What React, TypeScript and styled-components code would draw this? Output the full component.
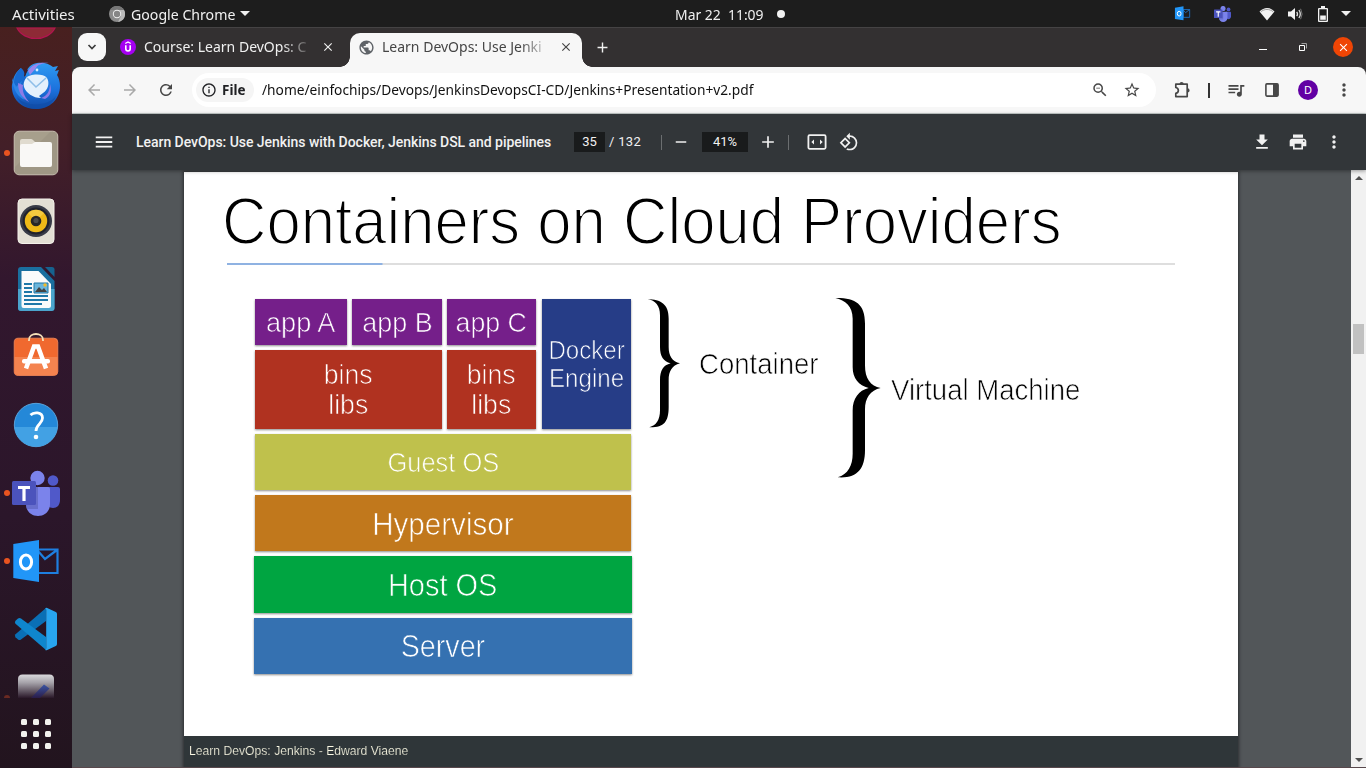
import React from "react";
import styled, { createGlobalStyle } from "styled-components";
import {
  MdAdd,
  MdArrowBack,
  MdArrowForward,
  MdClose,
  MdFileDownload,
  MdInfoOutline,
  MdMenu,
  MdMoreVert,
  MdPrint,
  MdPublic,
  MdQueueMusic,
  MdRefresh,
  MdRemove,
  MdRotate90DegreesCcw,
  MdStarBorder,
  MdZoomOut,
} from "react-icons/md";

const GlobalStyle = createGlobalStyle`
  * { box-sizing: border-box; }
  body { margin: 0; overflow: hidden; background: #1d1d1d; font-family: "Noto Sans", "Open Sans", sans-serif; }
  svg { display: block; flex: none; }
`;

const uiFont = `"Noto Sans", "Open Sans", sans-serif`;
const slideFont = `"Liberation Sans", Arial, sans-serif`;

const Desktop = styled.div`
  width: 1366px;
  height: 768px;
  display: flex;
  flex-direction: column;
  overflow: hidden;
`;

/* ---------- GNOME top bar ---------- */

const TopBar = styled.header`
  flex: none;
  height: 27px;
  display: grid;
  grid-template-columns: 640px 1fr 204px;
  align-items: center;
  background: #1d1d1d;
  color: #f0f0f0;
`;

const BarGroup = styled.div<{ $pad?: number }>`
  display: flex;
  align-items: center;
  height: 27px;
  padding-left: ${(p) => p.$pad ?? 0}px;
`;

const UiText = styled.span<{ $size?: number; $scale?: number; $width?: number; $bold?: boolean; $color?: string }>`
  flex: none;
  font: ${(p) => (p.$bold ? 700 : 400)} ${(p) => p.$size ?? 14}px/20px ${uiFont};
  color: ${(p) => p.$color ?? "inherit"};
  width: ${(p) => (p.$width ? `${p.$width}px` : "auto")};
  white-space: pre;
  transform: scaleX(${(p) => p.$scale ?? 1});
  transform-origin: left center;
`;

const Caret = styled.i<{ $gap: number }>`
  width: 10px;
  height: 5px;
  margin-left: ${(p) => p.$gap}px;
  border: 5px solid transparent;
  border-top-color: #f0f0f0;
  border-bottom: 0;
`;

const Bullet = styled.i`
  width: 8px;
  height: 8px;
  border-radius: 50%;
  background: #f2f2f2;
`;

const StatusArea = styled.div`
  display: grid;
  grid-template-columns: 40px 45px 28px 31px 20px 1fr;
  align-items: center;
  padding-left: 12px;
`;

/* ---------- Dock ---------- */

const Main = styled.div`
  flex: 1;
  min-height: 0;
  display: flex;
`;

const Dock = styled.nav`
  flex: none;
  width: 72px;
  display: flex;
  flex-direction: column;
  background: linear-gradient(180deg, #48201f 0%, #431f28 16%, #32172e 34%, #2b162a 66%, #22141e 100%);
`;

const DockItem = styled.div<{ $height?: number }>`
  flex: none;
  height: ${(p) => p.$height ?? 68}px;
  overflow: hidden;
`;

const AppGrid = styled.div`
  display: grid;
  grid-template-columns: repeat(3, 6px);
  gap: 6px;
  margin: 21px auto 0;
`;

const GridDot = styled.i`
  height: 6px;
  border-radius: 1.5px;
  background: #f2f2ee;
`;

/* ---------- Browser window ---------- */

const Window = styled.section`
  flex: 1;
  min-width: 0;
  display: flex;
  flex-direction: column;
  background: #333031;
`;

const TabStrip = styled.div`
  flex: none;
  height: 40px;
  border-top: 1px solid #454344;
  display: flex;
  padding: 5px 0 0 6px;
`;

const TabSearch = styled.div`
  width: 28px;
  height: 28px;
  border-radius: 9px;
  background: #f7f7f7;
  display: grid;
  place-items: center;
`;

const Tab = styled.div<{ $active?: boolean; $width: number }>`
  position: relative;
  width: ${(p) => p.$width}px;
  height: 34px;
  padding-left: ${(p) => (p.$active ? 8 : 14)}px;
  padding-bottom: 6px;
  display: flex;
  align-items: center;
  color: ${(p) => (p.$active ? "#454545" : "#f0f0f0")};
  background: ${(p) => (p.$active ? "#f7f7f7" : "transparent")};
  border-radius: 10px 10px 0 0;
  &::before, &::after {
    content: "";
    display: ${(p) => (p.$active ? "block" : "none")};
    position: absolute;
    bottom: 0;
    width: 10px;
    height: 10px;
  }
  &::before { left: -10px; background: radial-gradient(circle at 0 0, transparent 9.5px, #f7f7f7 10px); }
  &::after { right: -10px; background: radial-gradient(circle at 100% 0, transparent 9.5px, #f7f7f7 10px); }
`;

const TabTitle = styled.div`
  width: 172px;
  margin: 0 4px 2px 8px;
  mask-image: linear-gradient(90deg, #000 138px, transparent 170px);
`;

const TabClose = styled.div`
  width: 16px;
  display: grid;
  place-items: center;
`;

const Favicon = styled.div`
  width: 16px;
  height: 16px;
  display: grid;
  place-items: center;
`;

const NewTab = styled.div`
  width: 40px;
  height: 28px;
  color: #f0f0f0;
  display: grid;
  place-items: center;
`;

const WindowButtons = styled.div`
  margin-left: auto;
  height: 28px;
  display: grid;
  grid-template-columns: 40px 40px 40px;
  place-items: center;
  padding-right: 3px;
`;

const CloseButton = styled.div`
  width: 20px;
  height: 20px;
  border-radius: 50%;
  background: #ef4505;
  display: grid;
  place-items: center;
`;

const AddressRow = styled.div`
  flex: none;
  height: 47px;
  border-bottom: 1px solid #c7cecd;
  border-radius: 8px 8px 0 0;
  background: #f7f7f7;
  display: flex;
  align-items: center;
  padding: 0 4px;
  color: #474747;
`;

const Slot = styled.div<{ $width?: number; $color?: string }>`
  flex: none;
  width: ${(p) => p.$width ?? 36}px;
  display: grid;
  place-items: center;
  color: ${(p) => p.$color ?? "inherit"};
`;

const Omnibox = styled.div`
  width: 964px;
  height: 34px;
  margin: 0 8px;
  padding: 0 8px 0 4px;
  border-radius: 17px;
  background: #fff;
  display: flex;
  align-items: center;
`;

const FileChip = styled.div`
  width: 58px;
  height: 24px;
  margin-right: 8px;
  padding-left: 5px;
  border-radius: 12px;
  background: #f5f5f5;
  color: #202124;
  display: flex;
  align-items: center;
  gap: 5px;
`;

const Spacer = styled.div`
  flex: 1;
`;

const ToolbarRule = styled.i`
  width: 2px;
  height: 15px;
  background: #333;
`;

const Avatar = styled.div`
  width: 20px;
  height: 20px;
  border-radius: 50%;
  background: #6200a4;
  color: #fff;
  font: 400 11px/20px ${uiFont};
  text-align: center;
`;

/* ---------- PDF viewer ---------- */

const PdfToolbar = styled.div`
  position: relative;
  z-index: 1;
  flex: none;
  height: 56px;
  background: #323639;
  box-shadow: 0 1px 4px rgba(0, 0, 0, 0.4);
  display: flex;
  align-items: center;
  padding-left: 14px;
  color: #f1f1f1;
  font: 400 13px/20px Roboto, sans-serif;
`;

const PdfTitle = styled.div`
  width: 438px;
  margin-left: 14px;
  font: 500 14px/20px Roboto, sans-serif;
  letter-spacing: -0.04px;
  white-space: nowrap;
`;

const Field = styled.div<{ $width: number }>`
  width: ${(p) => p.$width}px;
  height: 20px;
  background: #191b1c;
  text-align: center;
`;

const PageTotal = styled.div`
  width: 54px;
  padding-left: 4px;
  letter-spacing: 0.3px;
  white-space: pre;
`;

const Divider = styled.i<{ $gap?: number }>`
  width: 1px;
  height: 15px;
  margin-right: ${(p) => p.$gap ?? 0}px;
  background: #6b6e70;
`;

const Viewport = styled.div`
  flex: 1;
  min-height: 0;
  display: flex;
  background: #525659;
  border-bottom: 1px solid #58484c;
`;

const Canvas = styled.div`
  flex: 1;
  padding: 2px 0 0 112px;
  overflow: hidden;
`;

const Scrollbar = styled.div`
  width: 15px;
  background: #f1f1f1;
  display: flex;
  flex-direction: column;
  align-items: center;
  padding: 6px 0 5px;
`;

const ScrollThumb = styled.div`
  width: 11px;
  height: 30px;
  margin: 144px 0 auto;
  background: #c1c1c1;
`;

const ScrollArrow = styled.i<{ $down?: boolean }>`
  border: 4px solid transparent;
  ${(p) => (p.$down ? "border-top-color: #505050; border-bottom: 0;" : "border-bottom-color: #505050; border-top: 0;")}
`;

const Slide = styled.article`
  width: 1054px;
  height: 596px;
  display: flex;
  flex-direction: column;
  background: #fff;
  box-shadow: 0 0 3px 1px #2c2e30;
`;

/* Light cut of the face: the outline is painted in the surface colour, which slims the stems. */
const SlideText = styled.div<{ $size: number; $line: number; $scale?: number; $thin?: number; $surface: string; $left?: boolean }>`
  font: 400 ${(p) => p.$size}px/${(p) => p.$line}px ${slideFont};
  white-space: pre;
  text-align: ${(p) => (p.$left ? "left" : "center")};
  -webkit-text-stroke: ${(p) => p.$thin ?? 0.7}px ${(p) => p.$surface};
  transform: scaleX(${(p) => p.$scale ?? 0.95});
  transform-origin: ${(p) => (p.$left ? "left" : "center")};
`;

const SlideHeader = styled.div`
  padding: 11px 0 0 38px;
  height: 91px;
  color: #000;
`;

const SlideRule = styled.div`
  flex: none;
  width: 948px;
  height: 2px;
  margin-left: 43px;
  background: linear-gradient(90deg, #8fb2e2 155px, #dedede 156px);
`;

const SlideBody = styled.div`
  flex: 1;
  display: flex;
  align-items: flex-start;
  padding: 34px 0 0 71px;
  color: #000;
`;

const Stack = styled.div`
  flex: none;
  display: grid;
  grid-template-columns: 92px 90px 89px 90px;
  grid-template-rows: 46px 79px 56px 56px 57px 56px;
  gap: 5px;
  color: #fff;
`;

const Block = styled.div<{ $fill: string; $cols?: number; $rows?: number; $outset?: number; $inset?: number; $drop?: number }>`
  grid-column: span ${(p) => p.$cols ?? 1};
  grid-row: span ${(p) => p.$rows ?? 1};
  margin: 0 -${(p) => p.$outset ?? 0}px;
  ${(p) => (p.$inset ? `margin-left: ${p.$inset}px;` : "")}
  padding-top: ${(p) => (p.$drop ?? 0) * 2}px;
  display: grid;
  place-items: center;
  align-content: center;
  background: ${(p) => p.$fill};
  box-shadow: 0 1px 2px rgba(0, 0, 0, 0.45);
`;

const Offset = styled.div<{ $top: number; $left: number; $width?: number }>`
  flex: none;
  padding-top: ${(p) => p.$top}px;
  margin-left: ${(p) => p.$left}px;
  width: ${(p) => (p.$width ? `${p.$width}px` : "auto")};
`;

const SlideFooter = styled.div`
  flex: none;
  height: 32px;
  padding: 5px 0 0 5px;
  background: #2f3639;
  color: #fbf9e4;
`;

/* ---------- Drawings ---------- */

const ThunderbirdIcon = () => (
  <svg width="72" height="68" viewBox="0 0 72 68">
    <defs>
      <linearGradient id="tb" x1="0" y1="0" x2="0" y2="1">
        <stop offset="0" stopColor="#2f9bf2" />
        <stop offset="0.6" stopColor="#1b70dc" />
        <stop offset="1" stopColor="#124ba4" />
      </linearGradient>
    </defs>
    <path d="M21 17c-5 4-8 9-8 14-2 3-1 8 0 12 3 9 12 15 23 15 14 0 24-10 24-23 0-4-1-8-3-11 1-2 1-3 2-5l-4 1 3-5-5 1c-4-4-11-5-16-4-6 1-10 5-11 10l-2 8z" fill="url(#tb)" />
    <path d="M25 17 28 19 24 27 22 27z" fill="#3c1d2a" />
    <path d="M21 17c-5 4-7 10-7 16l8 6 5-12-3-2c1-3 0-6-3-8z" fill="#1769cf" />
    <path d="M12 27c1 12 6 19 13 22-5-7-6-13-3-19l-6 6z" fill="#2c86e8" />
    <path d="M28 20c4-7 12-9 21-8-7 0-12 2-13 5l-6 7z" fill="#9a86ee" />
    <path d="M18 32c0 9 4 15 11 19-5-6-7-11-6-17z" fill="#8d7be6" />
    <path d="M26 27c3-4 17-5 21 0 3 5 1 12-4 15l-4 3 2 2c-8 0-15-5-17-11-1-3 0-6 2-9z" fill="#e4f0fc" />
    <path d="m27 27 9 9 10-9" fill="none" stroke="#8ebee8" strokeWidth="1.6" />
    <path d="M41 47c6-2 9-7 9-14 2 6 1 12-5 15z" fill="#8d7be6" />
    <circle cx="37" cy="19" r="1.4" fill="#d8ecff" />
    <path d="M17 46c8 10 31 10 39-1-4 9-11 13-20 13-8 0-15-4-19-12z" fill="#0f4da8" opacity=".7" />
  </svg>
);

const FilesIcon = () => (
  <svg width="72" height="68" viewBox="0 0 72 68">
    <rect x="14.2" y="12.2" width="43.6" height="43.6" rx="5" fill="#a79f8c" stroke="#d0c9ba" strokeWidth=".9" />
    <path d="M15 48 50 13h5q2 0 2 3v37q0 2-3 2H18q-3 0-3-3z" fill="#978f7c" opacity=".45" />
    <path d="M20 22q0-2 2-2h9q1 0 2 1l2 2h15v6H20z" fill="#e0dbcf" />
    <path d="M20 27q0-2 2-2h10l3-2h15q2 0 2 2v21q0 2-2 2H22q-2 0-2-2z" fill="#f9f8f6" />
    <circle cx="7" cy="34" r="3" fill="#e95420" />
  </svg>
);

const RhythmboxIcon = () => (
  <svg width="72" height="68" viewBox="0 0 72 68">
    <rect x="18" y="12" width="36" height="44.5" rx="4" fill="#e3dfd4" stroke="#f4f1ea" />
    <circle cx="36" cy="34" r="16" fill="#383b47" />
    <circle cx="36" cy="34" r="13.5" fill="#20222c" />
    <circle cx="36" cy="34" r="11.2" fill="#eeb917" />
    <path d="M36 34 28 26a11.2 11.2 0 0 1 16 0z" fill="#f8d65a" opacity=".6" />
    <circle cx="36" cy="34" r="5.3" fill="#262626" />
    <circle cx="36" cy="33.5" r="2.6" fill="#4b4b4b" />
  </svg>
);

const WriterIcon = () => (
  <svg width="72" height="68" viewBox="0 0 72 68">
    <path d="M21 12h20l13.500 14v27q0 3-3 3H21q-3 0-3-3V15q0-3 3-3z" fill="#1a6f9f" />
    <path d="M18 34h36.500v19q0 3-3 3H21q-3 0-3-3z" fill="#4ba4cd" />
    <path d="M21.500 16h17L51 29v21.500q0 2.500-2.500 2.500h-25q-2 0-2-2z" fill="#fbfbfb" />
    <path d="M45 12h7q2.500 0 2.500 2.500V22z" fill="#16628f" />
    <g fill="#1f78a8">
      <path d="M24 28h8v2h-8zM24 32h8v2h-8zM24 36h8v2h-8zM24 40h24v2H24zM24 44h24v2H24zM24 48h18v2H24z" />
    </g>
    <path d="M34 28h14v10H34z" fill="#6cb6dc" stroke="#1f78a8" />
    <path d="m35 37 4-5 3 3 2-2 3 4z" fill="#444" />
    <circle cx="45" cy="30" r="1.700" fill="#f3b928" />
  </svg>
);

const SoftwareIcon = () => (
  <svg width="72" height="68" viewBox="0 0 72 68">
    <rect x="14.2" y="15.200" width="43.600" height="37.300" rx="4" fill="#f0692f" stroke="#f58a5c" strokeWidth=".8" />
    <path d="M14.500 34h43v14.500q0 3.500-3.500 3.500H18q-3.500 0-3.500-3.500z" fill="#f4834f" />
    <path d="M29 18v-1c0-8 14-8 14 0v1" fill="none" stroke="#f5dfb8" strokeWidth="1.800" />
    <path d="m26 45.500 8-22h4l8 22" fill="none" stroke="#fff" strokeWidth="4.500" />
    <rect x="22" y="36" width="28" height="4.500" rx="2" fill="#fff" />
  </svg>
);

const HelpIcon = () => (
  <svg width="72" height="68" viewBox="0 0 72 68">
    <circle cx="36" cy="34" r="21.700" fill="#2488d8" stroke="#64b4ec" strokeWidth=".8" />
    <path d="M14.500 36h43a21.600 21.600 0 0 1-43 0z" fill="#42a1e4" />
    <path d="M30.500 24c3-3 12-3.500 12 3 0 6-6.500 6-6.500 13" fill="none" stroke="#fff" strokeWidth="2.800" />
    <circle cx="36" cy="46" r="2.300" fill="#fff" />
  </svg>
);

const TeamsShape = () => (
  <>
    <circle cx="53" cy="21.500" r="5.300" fill="#5059c9" />
    <path d="M46 28h12q2 0 2 2v11c0 5-3 8-7 8s-7-3-7-8z" fill="#5059c9" />
    <circle cx="37.500" cy="19" r="7.200" fill="#7b83eb" />
    <path d="M26 28h22q2 0 2 2v15c0 7-5 12-12 12s-12-5-12-12z" fill="#7b83eb" />
    <path d="M26 28h12v22h-11c-1-2-1-3-1-5z" fill="#5a61b8" opacity=".6" />
    <rect x="12" y="22" width="24" height="24" rx="1.500" fill="#4b53bc" />
    <path d="M18 27h12v3h-4.400v12h-3.200V30H18z" fill="#fff" />
  </>
);

const TeamsIcon = () => (
  <svg width="72" height="68" viewBox="0 0 72 68">
    <TeamsShape />
    <circle cx="7" cy="34" r="3" fill="#e95420" />
  </svg>
);

const OutlookShape = () => (
  <>
    <path d="M38 22.500h19.500v23.500H38zM38 24l7 8 12-9" fill="none" stroke="#1e7fe0" strokeWidth="2.200" />
    <path d="M13.300 17 39 13v42l-25.700-4z" fill="#2196f8" />
    <ellipse cx="26" cy="35" rx="5.600" ry="7" fill="none" stroke="#fff" strokeWidth="3" />
  </>
);

const OutlookIcon = () => (
  <svg width="72" height="68" viewBox="0 0 72 68">
    <OutlookShape />
    <circle cx="7" cy="34" r="3" fill="#e95420" />
  </svg>
);

const CodeIcon = () => (
  <svg width="72" height="68" viewBox="0 0 72 68">
    <path d="M46 13v13L21 44.500q-1.500 1-3 0l-2.500-2.300q-1.200-1.700 0-3z" fill="#0a6fb5" />
    <path d="M46 55V42L21 23.500q-1.500-1-3 0l-2.500 2.300q-1.200 1.700 0 3z" fill="#0f86cd" />
    <path d="M45 13.200q1-.9 2.200-.3l8.600 4q1.200.6 1.200 2v30.200q0 1.400-1.200 2l-8.600 4q-1.200.6-2.200-.3 1.200 0 1.200-1.500V14.700q0-1.500-1.200-1.500z" fill="#28a5ef" />
  </svg>
);

const EditorIcon = () => (
  <svg width="72" height="35" viewBox="0 0 72 35">
    <defs>
      <linearGradient id="ed" x1="0" y1="0" x2="0" y2="1">
        <stop offset="0" stopColor="#d9d9dc" />
        <stop offset="0.35" stopColor="#a5a2a9" />
        <stop offset="1" stopColor="#2a1829" />
      </linearGradient>
      <linearGradient id="pen" x1="0" y1="0" x2="0" y2="1">
        <stop offset="0" stopColor="#3a55a4" />
        <stop offset="1" stopColor="#2a1c48" />
      </linearGradient>
    </defs>
    <path d="M18 35V16q0-4.500 4.500-4.500h27q4.500 0 4.500 4.500v19z" fill="url(#ed)" />
    <path d="M31 35 44 21.500l5.500 4L40 35z" fill="url(#pen)" />
    <path d="M4 35a3 3 0 0 1 6 0z" fill="#6a2a22" />
  </svg>
);

const ChromeIcon = () => (
  <svg width="16" height="16" viewBox="0 0 16 16">
    <circle cx="8" cy="8" r="8" fill="#8b8b8b" />
    <path d="M8 4h7A8 8 0 0 1 9 16l3-6z" fill="#b9b9b9" />
    <path d="M1 4a8 8 0 0 1 14 0H8z" fill="#777" />
    <circle cx="8" cy="8" r="4.200" fill="#eee" />
    <circle cx="8" cy="8" r="3.200" fill="#858585" />
  </svg>
);

const WifiIcon = () => (
  <svg width="16" height="14" viewBox="0 0 16 14">
    <path d="M.5 4.500C5-.2 11-.2 15.500 4.500L8 13.500z" fill="#f2f2f2" />
    <path d="M1.800 4.800C5.500 1.700 10.500 1.700 14.200 4.800" fill="none" stroke="#8a8a8a" strokeWidth=".8" />
  </svg>
);

const VolumeIcon = () => (
  <svg width="16" height="14" viewBox="0 0 16 14">
    <path d="M1 4.500h3L8 1v12L4 9.500H1z" fill="#f2f2f2" />
    <path d="M9.700 4.800q1.600 2.200 0 4.400M11.900 3q2.800 4 0 8" fill="none" stroke="#e0e0e0" strokeWidth="1.300" />
    <path d="M13.600 1.800q3 5.200 0 10.400" fill="none" stroke="#777" />
  </svg>
);

const BatteryIcon = () => (
  <svg width="10" height="16" viewBox="0 0 10 16">
    <path d="M3 0h4v2h2q1 0 1 1v12q0 1-1 1H1q-1 0-1-1V3q0-1 1-1h2z" fill="#f2f2f2" />
    <path d="M1.300 3.300h7.400v11.400H1.300z" fill="#1d1d1d" />
    <path d="M2.200 9.500h5.600v4.300H2.200z" fill="#f2f2f2" />
  </svg>
);

const UdemyIcon = () => (
  <svg width="16" height="16" viewBox="0 0 16 16">
    <circle cx="8" cy="8" r="8" fill="#a600f2" />
    <path d="M5.300 4.600 8 3l2.700 1.600" fill="none" stroke="#fff" strokeWidth="1.200" />
    <path d="M5.800 6.300v3.500c0 3 4.400 3 4.400 0V6.300" fill="none" stroke="#fff" strokeWidth="1.600" />
  </svg>
);

const ChevronIcon = () => (
  <svg width="10" height="6" viewBox="0 0 10 6">
    <path d="m1.500 1 3.500 3.500L8.500 1" fill="none" stroke="#3c3c3c" strokeWidth="1.700" />
  </svg>
);

const MinimizeIcon = () => (
  <svg width="8" height="10" viewBox="0 0 8 10">
    <path d="M0 7h8v1H0z" fill="#fff" />
  </svg>
);

const RestoreIcon = () => (
  <svg width="8" height="8" viewBox="0 0 8 8">
    <path d="M2.500.5h5v5" fill="none" stroke="#a0a0a0" />
    <path d="M.5 2.500h5v5h-5z" fill="none" stroke="#fff" />
  </svg>
);

const PuzzleIcon = () => (
  <svg width="18" height="18" viewBox="0 0 18 18">
    <path d="M2.800 3.200H14.200V15.600H2.800V12.300C6.200 11.500 6.200 7.300 2.800 6.500Z" fill="none" stroke="#474747" strokeWidth="1.700" strokeLinejoin="round" />
    <path d="M6.500 3a2.100 2.100 0 0 1 4.200 0zM14.500 7.300a2.100 2.100 0 0 1 0 4.200z" fill="#474747" />
  </svg>
);

const SidePanelIcon = () => (
  <svg width="16" height="16" viewBox="0 0 16 16">
    <rect x="1.900" y="1.900" width="12.200" height="12.200" rx="1" fill="none" stroke="#474747" strokeWidth="1.600" />
    <path d="M9 2h5v12H9z" fill="#474747" />
  </svg>
);

const FitPageIcon = () => (
  <svg width="20" height="16" viewBox="0 0 20 16">
    <rect x="1.400" y="1.200" width="17.200" height="13.600" rx="1.200" fill="none" stroke="#f1f1f1" strokeWidth="1.800" />
    <path d="M7 5.500v5L4.300 8zM13 5.500v5L15.700 8z" fill="#f1f1f1" />
  </svg>
);

const SmallBrace = () => (
  <svg width="34" height="130" viewBox="21 381 102 390">
    <path d="M23 381C62 383 86 395 86 440V525C86 552 96 568 120 574C96 581 86 597 86 625V705C86 750 72 767 28 766C48 760 60 745 60 715V625C60 595 70 580 92 574C70 568 60 553 60 525V430C60 400 46 386 23 381Z" fill="#000" />
  </svg>
);

const LargeBrace = () => (
  <svg width="46" height="182" viewBox="584 381 138 546" overflow="visible">
    <path d="M585 378C645 377 674 395 674 455V580C674 620 690 642 721 648C690 655 674 678 674 712V835C674 892 650 920 592 916C623 907 637 880 637 845V715C637 680 655 655 685 648C655 640 637 620 637 585V440C637 402 615 385 585 378Z" fill="#000" />
  </svg>
);

export default function App() {
  return (
    <Desktop>
      <GlobalStyle />
      <TopBar>
        <BarGroup $pad={12}>
          <UiText $size={14.5} $width={97} $scale={1.04}>Activities</UiText>
          <ChromeIcon />
          <BarGroup $pad={6}>
            <UiText $size={14.5} $width={105} $scale={0.975}>Google Chrome</UiText>
            <Caret $gap={4} />
          </BarGroup>
        </BarGroup>
        <BarGroup $pad={35}>
          <UiText $size={14.5} $width={102} $scale={0.96}>Mar 22  11:09</UiText>
          <Bullet />
        </BarGroup>
        <StatusArea>
          <svg width="17" height="15" viewBox="12 12 48 45"><OutlookShape /></svg>
          <svg width="17" height="16" viewBox="12 12 48 45"><TeamsShape /></svg>
          <WifiIcon />
          <VolumeIcon />
          <BatteryIcon />
          <Caret $gap={3} />
        </StatusArea>
      </TopBar>

      <Main>
        <Dock>
          <DockItem $height={24}>
            <svg width="72" height="24" viewBox="0 0 72 24">
              <path d="M17 1c7 14 31 14 38 0z" fill="#8e2a36" stroke="#b31450" strokeWidth="1.200" />
            </svg>
          </DockItem>
          <DockItem><ThunderbirdIcon /></DockItem>
          <DockItem><FilesIcon /></DockItem>
          <DockItem><RhythmboxIcon /></DockItem>
          <DockItem><WriterIcon /></DockItem>
          <DockItem><SoftwareIcon /></DockItem>
          <DockItem><HelpIcon /></DockItem>
          <DockItem><TeamsIcon /></DockItem>
          <DockItem><OutlookIcon /></DockItem>
          <DockItem><CodeIcon /></DockItem>
          <DockItem $height={35}><EditorIcon /></DockItem>
          <AppGrid>
            {Array.from({ length: 9 }, (_, i) => <GridDot key={i} />)}
          </AppGrid>
        </Dock>

        <Window>
          <TabStrip>
            <TabSearch><ChevronIcon /></TabSearch>
            <Tab $width={244}>
              <Favicon><UdemyIcon /></Favicon>
              <TabTitle><UiText>Course: Learn DevOps: C</UiText></TabTitle>
              <TabClose><MdClose size={14} /></TabClose>
            </Tab>
            <Tab $active $width={232}>
              <Favicon><MdPublic size={17} color="#5f6368" /></Favicon>
              <TabTitle><UiText>Learn DevOps: Use Jenki</UiText></TabTitle>
              <TabClose><MdClose size={14} /></TabClose>
            </Tab>
            <NewTab><MdAdd size={17} /></NewTab>
            <WindowButtons>
              <MinimizeIcon />
              <RestoreIcon />
              <CloseButton><MdClose size={13} color="#fff" /></CloseButton>
            </WindowButtons>
          </TabStrip>

          <AddressRow>
            <Slot $color="#a9a9a9"><MdArrowBack size={18} /></Slot>
            <Slot $color="#a9a9a9"><MdArrowForward size={18} /></Slot>
            <Slot><MdRefresh size={18} /></Slot>
            <Omnibox>
              <FileChip>
                <MdInfoOutline size={16} />
                <UiText $bold $size={14} $scale={0.96}>File</UiText>
              </FileChip>
              <UiText $scale={0.981} $color="#111">/home/einfochips/Devops/JenkinsDevopsCI-CD/Jenkins+Presentation+v2.pdf</UiText>
              <Spacer />
              <Slot $width={32}><MdZoomOut size={18} /></Slot>
              <Slot $width={32}><MdStarBorder size={18} /></Slot>
            </Omnibox>
            <Slot><PuzzleIcon /></Slot>
            <Slot $width={18}><ToolbarRule /></Slot>
            <Slot><MdQueueMusic size={20} /></Slot>
            <Slot><SidePanelIcon /></Slot>
            <Slot><Avatar>D</Avatar></Slot>
            <Slot><MdMoreVert size={20} /></Slot>
          </AddressRow>

          <PdfToolbar>
            <Slot><MdMenu size={22} /></Slot>
            <PdfTitle>Learn DevOps: Use Jenkins with Docker, Jenkins DSL and pipelines</PdfTitle>
            <Field $width={31}>35</Field>
            <PageTotal>/ 132</PageTotal>
            <Slot $width={4}><Divider /></Slot>
            <Slot><MdRemove size={18} /></Slot>
            <Slot $width={3} />
            <Field $width={46}>41%</Field>
            <Slot $width={40}><MdAdd size={20} /></Slot>
            <Divider $gap={12} />
            <Slot $width={32}><FitPageIcon /></Slot>
            <Slot $width={32}><MdRotate90DegreesCcw size={20} /></Slot>
            <Spacer />
            <Slot><MdFileDownload size={20} /></Slot>
            <Slot><MdPrint size={20} /></Slot>
            <Slot><MdMoreVert size={20} /></Slot>
            <Slot $width={14} />
          </PdfToolbar>

          <Viewport>
            <Canvas>
              <Slide>
                <SlideHeader>
                  <SlideText $size={66} $line={76} $thin={1.8} $scale={0.934} $surface="#fff" $left>Containers on Cloud Providers</SlideText>
                </SlideHeader>
                <SlideRule />
                <SlideBody>
                  <Stack>
                    <Block $fill="#751f8a" $drop={0.5}><SlideText $size={27.9} $line={30} $scale={0.975} $surface="#751f8a">app A</SlideText></Block>
                    <Block $fill="#751f8a" $drop={0.5}><SlideText $size={27.9} $line={30} $scale={0.965} $surface="#751f8a">app B</SlideText></Block>
                    <Block $fill="#751f8a" $drop={0.5}><SlideText $size={27.9} $line={30} $scale={0.96} $surface="#751f8a">app C</SlideText></Block>
                    <Block $fill="#263d87" $rows={2} $inset={1}><SlideText $size={25} $line={28} $scale={0.965} $surface="#263d87">{"Docker\nEngine"}</SlideText></Block>
                    <Block $fill="#b03220" $cols={2} $drop={0.5}><SlideText $size={27.5} $line={30} $scale={0.97} $surface="#b03220">{"bins\nlibs"}</SlideText></Block>
                    <Block $fill="#b03220" $drop={0.5}><SlideText $size={27.5} $line={30} $scale={0.97} $surface="#b03220">{"bins\nlibs"}</SlideText></Block>
                    <Block $fill="#bfc14c" $cols={4} $drop={1}><SlideText $size={27.5} $line={30} $scale={0.925} $surface="#bfc14c">Guest OS</SlideText></Block>
                    <Block $fill="#c1781c" $cols={4} $drop={0.5}><SlideText $size={30.5} $line={34} $scale={0.97} $surface="#c1781c">Hypervisor</SlideText></Block>
                    <Block $fill="#00a541" $cols={4} $outset={1}><SlideText $size={30.5} $line={34} $surface="#00a541">Host OS</SlideText></Block>
                    <Block $fill="#3571b1" $cols={4} $outset={1}><SlideText $size={30.5} $line={34} $scale={0.94} $surface="#3571b1">Server</SlideText></Block>
                  </Stack>
                  <Offset $top={0} $left={16} $width={34}><SmallBrace /></Offset>
                  <Offset $top={48} $left={18} $width={136}>
                    <SlideText $size={29} $line={34} $surface="#fff" $left>Container</SlideText>
                  </Offset>
                  <Offset $top={0} $left={0} $width={46}><LargeBrace /></Offset>
                  <Offset $top={74} $left={10}>
                    <SlideText $size={29} $line={34} $surface="#fff" $left>Virtual Machine</SlideText>
                  </Offset>
                </SlideBody>
                <SlideFooter>
                  <SlideText $size={13} $line={20} $thin={0.2} $scale={0.935} $surface="#2f3639" $left>Learn DevOps: Jenkins - Edward Viaene</SlideText>
                </SlideFooter>
              </Slide>
            </Canvas>
            <Scrollbar>
              <ScrollArrow />
              <ScrollThumb />
              <ScrollArrow $down />
            </Scrollbar>
          </Viewport>
        </Window>
      </Main>
    </Desktop>
  );
}
